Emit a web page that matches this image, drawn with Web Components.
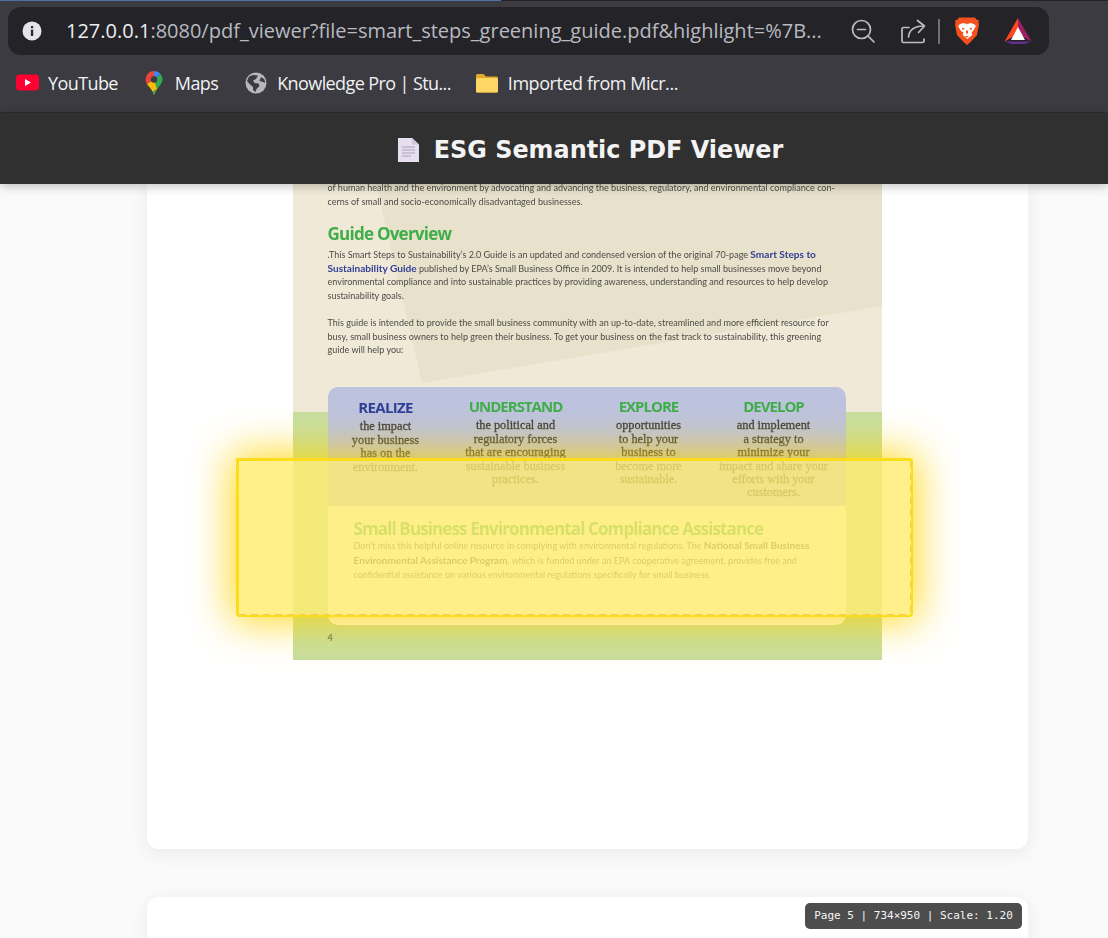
<!DOCTYPE html>
<html><head><meta charset="utf-8">
<style>
html,body{margin:0;height:938px;overflow:hidden;background:#fafafa}
body{display:flex;flex-direction:column;font-family:"Liberation Sans",sans-serif}
</style></head>
<body>
<browser-chrome></browser-chrome>
<app-header>ESG Semantic PDF Viewer</app-header>
<pdf-viewer></pdf-viewer>
<script>
function def(name,html){
  customElements.define(name,class extends HTMLElement{
    constructor(){super();this.attachShadow({mode:'open'}).innerHTML=html;}
  });
}
def('tool-icon',`<style>:host{display:inline-flex;align-items:center;justify-content:center;flex:none}</style><slot></slot>`);
def('bookmark-item',`<style>
:host{display:flex;align-items:center;gap:9px;font:18px/24px "Open Sans",sans-serif;color:#f1f1f3;letter-spacing:-.6px;white-space:nowrap}
.i{display:flex;width:24px;height:24px;align-items:center;justify-content:center}
</style><span class="i"><slot name="icon"></slot></span><slot></slot>`);
def('browser-chrome',`<style>
:host{display:block;height:113px;background:#3b3b41;box-sizing:border-box;border-bottom:1px solid #2c2c31;flex:none;position:relative}
.tabline{display:flex;height:1px}
.tabline i{display:block;width:501px;background:#4f6fa6}.tabline b{display:block;flex:1;background:#232327}
.wrap{padding:6px 59px 0 8px}
.omni{height:48px;background:#232328;border-radius:13px;display:flex;align-items:center;padding-left:13px;font:20px/26px "Open Sans",sans-serif;color:#b9bac0;white-space:nowrap}
.url{margin-left:23px;flex:none;width:762px;overflow:hidden}
.url b{font-weight:400;color:#eceef2}
.tools{display:flex;align-items:center;margin-left:22px}
.bm{display:flex;align-items:center;height:55px;padding-left:15px;padding-bottom:2px}
svg{display:block}
</style>
<div class="tabline"><i></i><b></b></div>
<div class="wrap"><div class="omni">
<tool-icon><svg width="22" height="22" viewBox="0 0 22 22"><circle cx="11" cy="11" r="9.5" fill="#e4e5ea"/><rect x="9.9" y="9.6" width="2.3" height="6.4" fill="#2a2a2e"/><rect x="9.9" y="6" width="2.3" height="2.2" fill="#2a2a2e"/></svg></tool-icon>
<span class="url"><b>127.0.0.1</b>:8080/pdf_viewer?file=smart_steps_greening_guide.pdf&amp;highlight=%7B...</span>
<span class="tools">
<tool-icon><svg width="26" height="26" viewBox="0 0 26 26" fill="none" stroke="#bdbec3" stroke-width="1.7" stroke-linecap="round"><circle cx="11.5" cy="11.5" r="9"/><path d="M7.5 11.5h8M18 18l6 6"/></svg></tool-icon>
<tool-icon style="margin-left:24px"><svg width="26" height="26" viewBox="0 0 26 26" fill="none" stroke="#bdbec3" stroke-width="1.7" stroke-linecap="round" stroke-linejoin="round"><path d="M9 9.5H3.500A1.500 1.500 0 0 0 2 11v12a1.500 1.500 0 0 0 1.500 1.500h19A1.500 1.500 0 0 0 24 23v-2"/><path d="M8.500 19c.6-6.500 5-10.500 14-11M17.500 2.500l7 5.500-6 6.500"/></svg></tool-icon>
<span style="display:block;width:2px;height:25px;background:#6f7076;margin-left:12px"></span>
<tool-icon style="margin-left:14px"><svg width="26" height="30" viewBox="0 0 26 30"><path d="M5 1.500h16l1.500 2 2.500 1-.5 2 .5 2-2 10.500-7 7.500L13 29l-3-2.500-7-7.500L1 8.500l.5-2-.5-2 2.500-1z" fill="#f4511e"/><path d="M5.500 8.500 9 7l4 1 4-1 3.500 1.500 1.500 1.500-3 5-1.500 1.500.8 2.500-3.300 2.500-1.500 1.500-1.500-1.500-3.300-2.500.8-2.500L7 15 4 10z" fill="#fff"/><path d="M8 11.500l3 1.200-2.500 1.300zM18 11.500l-3 1.200 2.500 1.300zM11 20h4l-2 1.500zM12 14.500h2v3h-2z" fill="#f4511e"/></svg></tool-icon>
<tool-icon style="margin-left:24px"><svg width="28" height="26" viewBox="0 0 28 26"><path d="M14 0 27.500 23.500 14 16z" fill="#9e1f63"/><path d="M14 0 .5 23.500 14 16z" fill="#ff4724"/><path d="M.5 23.500h27L20.500 26h-13z" fill="#662d91"/><path d="M14 9 21 22H7z" fill="#fff"/></svg></tool-icon>
</span>
</div></div>
<div class="bm">
<bookmark-item><svg slot="icon" width="24" height="17" viewBox="0 0 24 17"><rect width="23" height="16" x="1" y=".5" rx="3.500" fill="#ff0033"/><path d="M10 5v7l6-3.500z" fill="#fff"/></svg>YouTube</bookmark-item>
<bookmark-item style="margin-left:24px"><svg slot="icon" width="18" height="24" viewBox="0 0 18 24"><path d="M9 0A8.500 8.500 0 0 0 .5 8.500c0 1.800.6 3.200 1.400 4.500L9 8.500z" fill="#e8453c"/><path d="M2 13c1.800 3 5.500 5.500 7 11 .8-2.700 2-4.500 3.300-6.200L9 8.500z" fill="#fbbc05"/><path d="M9 0c2.600 0 5 1.200 6.500 3L9 8.500z" fill="#4285f4"/><path d="M15.500 3c1.200 1.400 2 3.400 2 5.500 0 2-1 3.800-2 5.300-1 1.400-2.300 2.500-3.200 4L9 8.500z" fill="#34a853"/><path d="M12.300 17.800c-1.300 1.700-2.500 3.500-3.300 6.200l-1.400-3.500z" fill="#34a853"/><circle cx="9" cy="8.500" r="3.200" fill="#3b3b41"/></svg>Maps</bookmark-item>
<bookmark-item style="margin-left:26px"><svg slot="icon" width="22" height="22" viewBox="0 0 22 22"><circle cx="11" cy="11" r="10.500" fill="#b6b8bd"/><path d="M4 4.500 8 3l5 .5-2 3.500-3 1.500L9.500 11l4 .5 1 2.500-3 3-1 3L8 18v-3l-3.500-3L2 9zM16 5l3.500 2.500L20 11l-3-1.500-2.500-.5z" fill="#3b3b41"/></svg>Knowledge Pro | Stu...</bookmark-item>
<bookmark-item style="margin-left:24px;letter-spacing:-.45px"><svg slot="icon" width="24" height="20" viewBox="0 0 24 20"><path d="M1 2.500A1.500 1.500 0 0 1 2.500 1h6L11 3.500h10.500A1.500 1.500 0 0 1 23 5v13a1.500 1.500 0 0 1-1.500 1.500h-19A1.500 1.500 0 0 1 1 18z" fill="#e0a92a"/><rect x="1" y="5" width="22" height="14.500" rx="1.500" fill="#fdd663"/></svg>Imported from Micr...</bookmark-item>
</div>`);
def('app-header',`<style>
:host{display:flex;flex:none;height:71px;align-items:center;justify-content:center;gap:15px;background:#303030;color:#f3f3f3;font:bold 23.9px/32px "DejaVu Sans",sans-serif;box-shadow:0 2px 10px rgba(0,0,0,.25);position:relative;z-index:5;padding:3px 0 0 73px;box-sizing:border-box}
svg{display:block}
</style><svg width="21" height="24" viewBox="0 0 21 24"><path d="M0 0h14l7 6.500V24H0z" fill="#e7dff0"/><path d="M14 0l7 6.500h-7z" fill="#cfc6dc"/><path d="M4 9h13M4 12h13M4 15h13M4 18h9" stroke="#a9a2b6" stroke-width="1"/></svg><slot></slot>`);
def('pdf-viewer',`<style>
:host{display:flex;flex-direction:column;flex:1;min-height:0;overflow:hidden;padding:0 80px 0 147px;gap:48px}
.card{background:#fff;border-radius:0 0 12px 12px;box-shadow:0 4px 20px rgba(0,0,0,.07);position:relative;flex:none;height:665px;display:flex;justify-content:center;align-items:flex-start}
.next{border-radius:12px 12px 0 0;height:200px}
</style>
<div class="card"><guide-page></guide-page><highlight-box></highlight-box></div>
<div class="card next"><page-label>Page 5 | 734×950 | Scale: 1.20</page-label></div>`);
def('page-label',`<style>
:host{position:absolute;right:6px;top:6px;width:217px;height:26px;box-sizing:border-box;background:#4d4d4d;color:#f6f6f6;border-radius:5px;font:11px/26px "DejaVu Sans Mono",monospace;text-align:center;white-space:nowrap}
</style><slot></slot>`);
def('highlight-box',`<style>
:host{position:absolute;left:89px;top:274px;width:677px;height:159px;box-sizing:border-box;background:rgba(255,236,111,.8);border:solid #fbdd1e;border-width:3px 2px 2px 3px;border-radius:0 3px 4px 3px;box-shadow:0 0 40px 5px rgba(255,212,0,.86);z-index:2}
i{position:absolute;display:block}
.r{right:0;top:0;bottom:0;width:1.5px;background:repeating-linear-gradient(to bottom,#f8c95a 0 7px,transparent 7px 12px)}
.b{left:0;right:0;bottom:0;height:1.5px;background:repeating-linear-gradient(to right,#f8c95a 0 7px,transparent 7px 12px)}
</style><i class="r"></i><i class="b"></i>`);
def('guide-page',`<style>
:host{display:block;width:589px;height:476px;margin-left:-1px;overflow:hidden;position:relative;box-sizing:border-box;padding:0 35px;
 background:linear-gradient(#f0e9d8 228px,#c7dea0 228px);filter:blur(.4px);color:#4c4b47;font:9.05px/13.4px Lato,sans-serif}
.poly{position:absolute;left:0;top:0;width:589px;height:210px}
.flow{position:relative}
p{margin:0;white-space:nowrap}
p.first{line-height:8px;margin-bottom:3px}
h2{margin:16px 0 4px;font:bold 17px/20px "Open Sans",sans-serif;letter-spacing:-.75px;color:#3fae49}
.gap{margin-top:14.400px}
a{color:#2f3f96;font-weight:700;font-size:10.100px}
.panel{margin-top:30.500px;width:518px;border-radius:10px;overflow:hidden}
.top{height:119px;background:#bdc3de;display:grid;grid-template-columns:116px 144px 122px 128px;text-align:center;box-sizing:border-box;padding-top:10px}
.top h3{margin:0 0 4px;font:bold 15px/18px "Open Sans",sans-serif;letter-spacing:-1px;color:#3fae49}
.top h3.b{color:#2f3f96;margin-top:1px;letter-spacing:-.7px}
.top div{font:400 12.300px/13.450px "Liberation Serif",serif;color:#3d3c3a;-webkit-text-stroke:.3px #3d3c3a}
.bottom{height:119px;background:#fdfaf0;padding:13.500px 26px 0;box-sizing:border-box}
.bottom h3{margin:0;font:bold 17px/18px "Open Sans",sans-serif;letter-spacing:-.88px;color:#3fae49}
.bottom p{line-height:14px;font-size:9.050px}
.bottom b{font-weight:700;font-size:10px}
.num{margin-top:6px}
</style>
<svg class="poly" viewBox="0 0 589 210"><polygon points="83,0 589,0 589,122 129,199" fill="#e8e1cb"/></svg>
<div class="flow">
<p class="first">of human health and the environment by advocating and advancing the business, regulatory, and environmental compliance con-</p>
<p>cerns of small and socio-economically disadvantaged businesses.</p>
<h2>Guide Overview</h2>
<p>.This Smart Steps to Sustainability’s 2.0 Guide is an updated and condensed version of the original 70-page <a>Smart Steps to</a></p>
<p><a>Sustainability Guide</a> published by EPA’s Small Business Office in 2009. It is intended to help small businesses move beyond</p>
<p>environmental compliance and into sustainable practices by providing awareness, understanding and resources to help develop</p>
<p>sustainability goals.</p>
<p class="gap">This guide is intended to provide the small business community with an up-to-date, streamlined and more efficient resource for</p>
<p>busy, small business owners to help green their business. To get your business on the fast track to sustainability, this greening</p>
<p>guide will help you:</p>
<div class="panel">
<div class="top">
<section><h3 class="b">REALIZE</h3><div>the impact<br>your business<br>has on the<br>environment.</div></section>
<section><h3>UNDERSTAND</h3><div>the political and<br>regulatory forces<br>that are encouraging<br>sustainable business<br>practices.</div></section>
<section><h3>EXPLORE</h3><div>opportunities<br>to help your<br>business to<br>become more<br>sustainable.</div></section>
<section><h3>DEVELOP</h3><div>and implement<br>a strategy to<br>minimize your<br>impact and share your<br>efforts with your<br>customers.</div></section>
</div>
<div class="bottom">
<h3>Small Business Environmental Compliance Assistance</h3>
<p>Don’t miss this helpful online resource in complying with environmental regulations. The <b>National Small Business</b></p>
<p><b>Environmental Assistance Program</b>, which is funded under an EPA cooperative agreement, provides free and</p>
<p>confidential assistance on various environmental regulations specifically for small business.</p>
</div>
</div>
<div class="num">4</div>
</div>`);
</script>
</body></html>
